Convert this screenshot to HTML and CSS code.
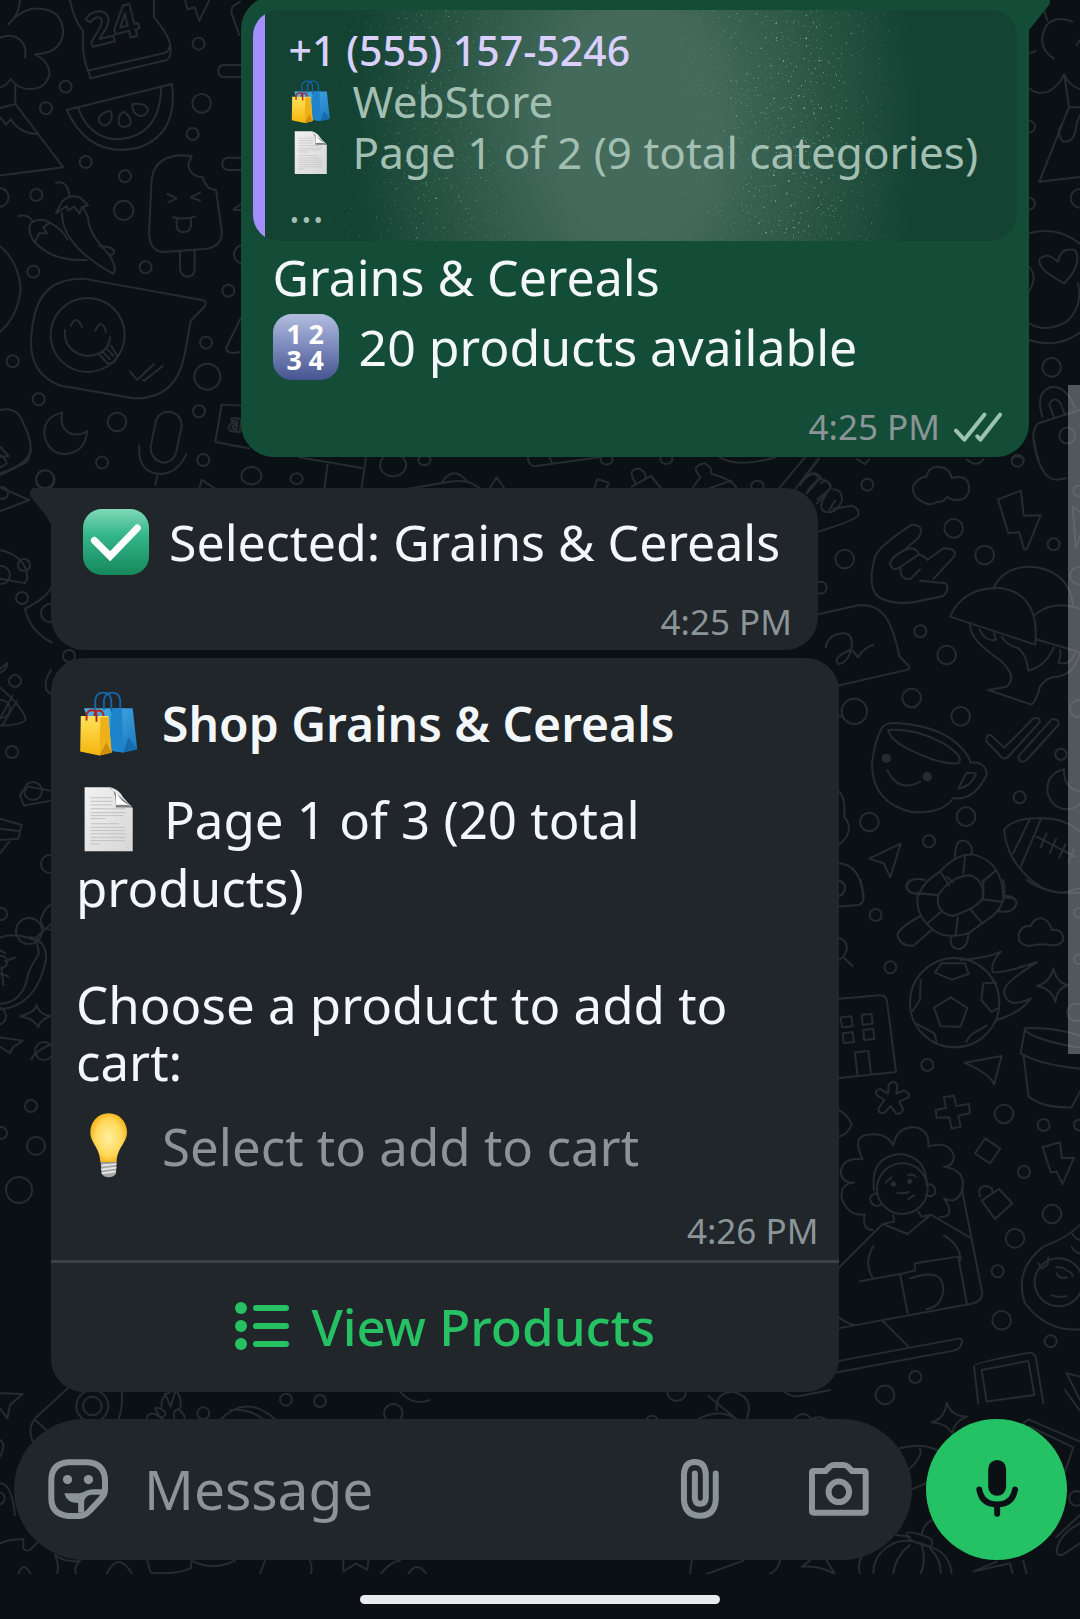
FILE: index.html
```html
<!DOCTYPE html>
<html lang="en">
<head>
<meta charset="utf-8">
<meta name="viewport" content="width=device-width, initial-scale=1">
<title>WebStore chat</title>
<link rel="stylesheet" href="styles.css">
</head>
<body>
<svg class="symbols" aria-hidden="true">
  <defs>
    <linearGradient id="g-blue" x1="0" x2="1" y2="1"><stop offset="0" stop-color="#4db4ec"/><stop offset="1" stop-color="#1b78c0"/></linearGradient>
    <linearGradient id="g-gold" y2="1" x2="0"><stop offset="0" stop-color="#ffe25a"/><stop offset="1" stop-color="#f5b50d"/></linearGradient>
    <linearGradient id="g-paper" x1="0" x2="1" y2="1"><stop offset="0" stop-color="#f2f2f2"/><stop offset="1" stop-color="#d6d6d6"/></linearGradient>
    <linearGradient id="g-green" y2="1" x2="0"><stop offset="0" stop-color="#7fd9b8"/><stop offset=".4" stop-color="#33b58a"/><stop offset="1" stop-color="#16885b"/></linearGradient>
    <linearGradient id="g-indigo" y2="1" x2="0"><stop offset="0" stop-color="#b3bddf"/><stop offset=".5" stop-color="#7b89bb"/><stop offset="1" stop-color="#465590"/></linearGradient>
    <radialGradient id="g-bulb" cx=".5" cy=".5" r=".6"><stop offset="0" stop-color="#fff0a0"/><stop offset=".6" stop-color="#ffd85a"/><stop offset="1" stop-color="#f2a200"/></radialGradient>
  </defs>
  <symbol id="bags" viewBox="141 630 198 206">
    <path d="M162 684H314L328 812L285 822L205 812Z" fill="url(#g-blue)"/>
    <path d="M248 684L240 816L285 822L280 684Z" fill="#1d84cb"/><path d="M285 822L300 775L328 812Z" fill="#156bab"/>
    <path d="M197 690V658Q200 635 222 635Q244 635 247 658V694M224 690V658Q228 635 250 635Q272 635 275 658V682" fill="none" stroke="#1764a8" stroke-width="6"/>
    <path d="M152 708H238L248 822L210 831L150 819Z" fill="url(#g-gold)"/>
    <path d="M213 712H238L248 822L210 831Z" fill="#eeb11a"/><path d="M210 831L232 790L248 822Z" fill="#d18d0c"/>
    <path d="M170 722V704Q173 690 187 690Q201 690 201 704V726M194 708Q197 690 209 691Q222 692 223 708" fill="none" stroke="#b3221b" stroke-width="6"/>
  </symbol>
  <symbol id="page" viewBox="141 917 198 203">
    <path d="M165 918H245Q270 925 283 948L313 982V1115H165Z" fill="url(#g-paper)"/>
    <path d="M240 918Q262 925 261 980H313Z" fill="#7d7d7d"/><path d="M261 929Q275 965 311 975Q290 970 262 972Z" fill="#fff"/>
    <path d="M183 950H250M183 961H252M183 972H250M183 984H290M183 996H292M183 1005H285M183 1014H230M183 1030H270M183 1041H290M183 1051H288M183 1061H292M183 1072H290M183 1082H290M183 1092H212" stroke="#c0c0c0" stroke-width="3"/>
  </symbol>
  <symbol id="check" viewBox="158 87 197 197">
    <rect x="158" y="87" width="197" height="197" rx="56" fill="url(#g-green)"/>
    <path d="M192 181L239 228L320 144" fill="none" stroke="#fff" stroke-width="21" stroke-linecap="round"/>
  </symbol>
  <symbol id="bulb" viewBox="141 69 198 198">
    <path d="M239 70C272 70 294 96 294 127C294 160 264 172 263 217H214C213 172 184 160 184 127C184 96 206 70 239 70Z" fill="url(#g-bulb)"/>
    <path d="M215 217H263L261 250Q255 262 239 262Q223 262 218 250Z" fill="#a9a9a9"/>
    <path d="M217 227L262 222M216 239L262 233M218 250L260 244" stroke="#e8e8e8" stroke-width="5"/>
  </symbol>
</svg>

<div class="wallpaper" aria-hidden="true">
<svg viewBox="0 0 1080 1574" preserveAspectRatio="xMinYMin slice">
  <!-- upper left -->
  <g transform="scale(.3333)">
    <path d="M60 0Q58 45 25 73Q70 20 120 26Q185 30 190 95Q185 160 105 163Q150 185 148 225Q135 268 90 267Q55 268 32 237Q15 262 -5 262M-5 115Q40 95 65 125Q80 140 75 172M46 255V312L190 502L-5 527M-5 325L46 312M-5 345L18 374L32 358Q60 400 112 402"/>
    <path d="M210 0Q220 55 250 95Q245 160 260 200L272 235L500 180Q512 175 512 148Q512 110 462 52V0M262 212L490 160Q506 155 508 142"/>
    <text x="272" y="142" transform="rotate(-14 272 142)" class="doodle-number">24</text>
    <path d="M200 330L516 252Q535 400 420 442Q270 480 200 330ZM234 322Q265 410 345 418Q480 415 484 262M330 332Q295 340 296 362Q310 385 328 370Q342 350 330 332ZM370 335Q350 350 358 375Q375 388 392 372Q395 350 370 335ZM397 312Q440 308 444 330Q435 355 412 345Q395 335 397 312Z"/>
    <path d="M555 0L563 28L584 22L598 62L628 0M720 5L705 15Q692 20 695 40L718 105M722 195H670Q655 198 655 213Q655 230 670 231H722M722 473H680Q665 480 667 492Q668 508 685 510H722M722 613L700 629L722 631"/>
    <path d="M575 468Q470 455 455 535L447 700Q450 755 490 756L605 748Q670 745 665 690L648 570Q618 570 608 532Q565 528 565 490ZM540 753V808Q545 830 562 830Q582 830 584 808V750M502 582L530 595L505 607M600 578L572 592L600 602M519 652Q550 660 586 650M530 656V680Q535 698 552 696Q570 696 573 676V656"/>
    <path d="M168 548Q205 540 208 590M168 640L186 605Q210 580 242 594L264 616L246 622L238 640L222 620L205 632L200 618ZM186 640Q185 735 340 822Q355 800 320 755Q265 700 264 650L250 624M56 648Q85 642 98 664M104 728Q80 690 92 670Q120 650 150 668L130 682L140 700L118 700ZM108 730Q160 785 260 780M150 668Q190 690 202 718M298 738Q345 740 342 758Q338 768 324 762"/>
    <path d="M250 836Q130 835 105 940Q75 1060 120 1115Q160 1160 210 1162L400 1195Q530 1200 555 1060L572 963L615 918Q622 902 606 900ZM195 990Q190 1055 260 1068Q325 1065 330 1012M212 978Q230 940 246 982M286 992Q305 950 318 996M300 1066L322 1090Q345 1095 352 1068L334 1038M308 1055L330 1078M320 1045L340 1068M390 1115L411 1140L462 1092M428 1140L433 1142L488 1098"/>
    <circle cx="263" cy="1005" r="111"/>
    <path d="M187 1238Q130 1250 133 1305Q145 1362 197 1362Q255 1358 262 1293Q240 1308 215 1302Q175 1285 187 1238ZM452 1340L468 1262Q480 1232 515 1236Q545 1245 545 1280L528 1360Q515 1390 485 1388Q450 1375 452 1340ZM418 1337Q412 1420 485 1422Q535 1418 559 1362M472 1426L466 1456M-5 1232Q50 1215 70 1270Q95 1320 92 1355Q80 1395 -5 1422M-5 1335L26 1368L-5 1372M722 955Q690 1020 678 1045Q680 1065 718 1056M722 1217L665 1214L646 1326L722 1340M598 1465L605 1440L645 1465M-5 735Q55 780 62 865Q55 950 -5 1000"/>
    <text x="682" y="1292" transform="rotate(8 682 1292)" class="doodle-letter">a</text>
    <g><circle cx="596" cy="131" r="18"/><circle cx="197" cy="260" r="18"/><circle cx="138" cy="325" r="18"/><circle cx="257" cy="486" r="18"/><circle cx="375" cy="529" r="18"/><circle cx="109" cy="585" r="18"/><circle cx="578" cy="402" r="18"/><circle cx="605" cy="310" r="28"/><circle cx="371" cy="631" r="29"/><circle cx="437" cy="802" r="18"/><circle cx="100" cy="815" r="18"/><circle cx="685" cy="872" r="18"/><circle cx="618" cy="1028" r="18"/><circle cx="622" cy="1130" r="39"/><circle cx="38" cy="1084" r="18"/><circle cx="116" cy="1198" r="18"/><circle cx="351" cy="1266" r="28"/><circle cx="597" cy="1234" r="18"/><circle cx="306" cy="1388" r="18"/><circle cx="610" cy="1380" r="18"/><circle cx="136" cy="1440" r="28"/><circle cx="-2" cy="592" r="28"/><circle cx="730" cy="763" r="28"/></g>
  </g>
  <!-- upper right -->
  <g transform="translate(650 0) scale(.3333)">
    <path d="M1267 65Q1220 45 1190 75Q1155 140 1212 176M1182 30L1192 62M1137 160L1157 153M1290 120L1280 136M1137 265Q1160 285 1195 275Q1230 255 1243 222Q1255 255 1290 268M1243 222L1257 322H1300M1257 322L1168 545L1300 530M1237 370Q1215 400 1240 425Q1275 430 1280 370L1290 345"/>
    <path d="M1137 700Q1230 675 1300 740M1284 850Q1300 920 1250 965Q1190 1000 1137 970M1137 1020Q1230 1050 1300 990M1243 850Q1155 805 1170 775Q1195 755 1224 786Q1230 740 1275 750Q1300 790 1243 850ZM1177 1250Q1155 1180 1200 1162Q1250 1155 1275 1225M1212 1252L1198 1215Q1210 1185 1232 1210L1245 1245M1165 1380Q1135 1295 1165 1270L1290 1230M1088 1375Q1100 1362 1122 1378M1137 800Q1165 830 1137 875"/>
    <g><circle cx="1137" cy="380" r="18"/><circle cx="1137" cy="611" r="18"/><circle cx="1290" cy="595" r="28"/><circle cx="1205" cy="1102" r="28"/><circle cx="1252" cy="1307" r="24"/></g>
  </g>
  <!-- between the first two messages -->
  <g transform="translate(230 440) scale(.3827 .3333)">
    <path d="M0 15L50 25M180 52L345 84M256 65L246 150M355 52L343 150M466 146L570 126Q630 115 655 150M555 125Q585 75 620 125M676 150L697 112L720 150M778 52Q780 80 800 78L965 52M835 52L842 70M950 150L960 118L990 128L982 150M1050 140L1100 108L1130 150M1060 130Q1035 85 1070 86Q1090 100 1085 115M1205 150L1230 110Q1200 80 1240 70Q1260 80 1258 102Q1320 120 1325 150M1240 150L1310 122M1280 52Q1330 85 1425 52M1502 52L1435 145M1538 55L1475 150M1500 115Q1530 85 1545 115Q1510 140 1508 160M1545 118Q1565 120 1570 145L1535 178"/>
    <g><circle cx="56" cy="107" r="26"/><circle cx="174" cy="116" r="16"/><circle cx="426" cy="75" r="34"/><circle cx="508" cy="60" r="16"/><circle cx="984" cy="58" r="16"/><circle cx="1140" cy="56" r="16"/><circle cx="1378" cy="138" r="16"/></g>
  </g>
  <!-- right, beside the replies -->
  <g transform="translate(800 440) scale(.3333)">
    <path d="M0 130L55 60M0 135Q30 90 52 108Q62 120 20 160M62 130Q80 115 92 135Q95 150 50 190M100 148Q130 150 125 185Q105 225 75 215Q50 205 80 160M105 182L88 210M100 206L155 197Q180 205 175 225Q170 240 55 275M172 58L195 72L208 58M500 58Q530 85 550 58"/>
    <path d="M347 170Q325 140 358 118Q370 108 378 112Q385 80 415 80Q450 82 455 114Q508 100 508 150Q500 182 470 180Q450 180 442 170Q430 188 410 186Q385 205 347 170ZM594 178L663 152L671 227L722 226L680 328H672L658 277L625 279Z"/>
    <path d="M225 350Q235 320 335 254Q375 255 358 290L314 330M225 350Q200 440 235 470Q270 495 340 487L430 468Q450 450 438 430L360 422M314 330Q345 315 357 343L305 378Q278 400 270 370Q275 350 314 330ZM357 345Q370 345 382 360L430 325Q475 325 462 350L400 417M360 388L330 418Q295 415 303 382"/>
    <path d="M55 523L175 496Q240 490 268 550Q285 585 298 648L328 680Q330 690 310 692L110 738M77 622Q85 580 135 580Q160 585 155 620Q145 670 115 672Q95 655 150 630Q165 635 173 652Q195 620 220 615"/>
    <path d="M450 530Q490 440 600 444Q720 460 706 614ZM580 443Q620 370 710 382Q810 400 820 500M705 525Q760 475 850 510M709 598L850 640M510 555Q510 600 600 660Q655 710 620 740L565 750L695 794Q710 780 720 740Q740 710 770 710Q820 705 840 640M538 568Q555 605 588 600L582 580M605 590Q620 615 655 625Q680 645 685 692Q735 680 762 622M780 630Q785 650 775 668Q810 680 825 640"/>
    <path d="M245 865Q255 845 300 850Q430 860 490 930Q510 955 512 968Q560 965 560 1005Q520 1085 460 1074Q430 1120 340 1117Q215 1090 216 970Q225 900 245 865ZM265 870Q270 900 330 930Q420 975 475 970Q495 950 430 910Q350 865 265 870ZM500 998L528 1000Q515 1040 475 1046ZM262 990Q295 1060 360 1025"/>
    <circle cx="259" cy="955" r="11" class="dot"/><circle cx="382" cy="1010" r="11" class="dot"/>
    <path d="M560 905Q555 885 572 885L613 923L700 835Q720 830 720 845L625 950Q613 960 605 952ZM655 950L755 838Q780 835 775 855L680 960Q660 975 655 950ZM792 988Q740 1000 742 1055Q755 1105 800 1108Q830 1105 840 1090M792 988Q790 1045 840 1055"/>
    <path d="M612 1170Q640 1135 710 1135Q790 1130 840 1175M612 1170Q620 1240 660 1285Q720 1360 790 1358L840 1345M640 1240L688 1140M660 1285L722 1140M710 1190L825 1250M740 1180L722 1222M768 1197L750 1238M797 1213L778 1252M822 1227L806 1266"/>
    <path d="M207 1256L302 1211L271 1312L251 1270ZM110 1048Q140 1070 132 1130Q170 1175 110 1220M110 1270Q185 1270 190 1380M110 1320Q135 1325 135 1345Q130 1370 110 1370M702 0Q720 130 780 118L800 115M110 825L125 830"/>
    <path d="M465 1250Q465 1200 492 1202Q520 1210 515 1243M355 1368Q365 1330 420 1295Q470 1240 520 1244Q610 1265 610 1380M490 1300L495 1248M420 1295L448 1336M548 1325L587 1292M355 1360L415 1366M415 1366Q450 1310 510 1306Q555 1320 548 1380M375 1320Q325 1310 320 1340Q325 1362 355 1360M610 1372L640 1375"/>
    <g><circle cx="202" cy="134" r="18"/><circle cx="653" cy="62" r="18"/><circle cx="461" cy="265" r="28"/><circle cx="134" cy="357" r="28"/><circle cx="554" cy="345" r="28"/><circle cx="761" cy="313" r="18"/><circle cx="62" cy="443" r="18"/><circle cx="361" cy="574" r="18"/><circle cx="440" cy="645" r="28"/><circle cx="335" cy="774" r="28"/><circle cx="482" cy="829" r="28"/><circle cx="163" cy="814" r="38"/><circle cx="783" cy="943" r="17"/><circle cx="659" cy="1072" r="18"/><circle cx="498" cy="1130" r="28"/><circle cx="208" cy="1146" r="28"/><circle cx="387" cy="1204" r="18"/><circle cx="836" cy="153" r="16"/><circle cx="836" cy="407" r="26"/><circle cx="836" cy="806" r="26"/></g>
    <path d="M818 200L828 325L860 230Z"/>
  </g>
  <!-- lower right -->
  <g transform="translate(800 880) scale(.3333)">
    <path d="M355 40Q340 100 400 150Q440 180 505 160L575 110Q625 70 610 0M415 45Q405 100 460 108Q540 80 550 50V0M355 40L415 45M380 132L422 96M467 165L473 113M545 128L513 90M605 65L545 58M460 8L440 -10M362 108Q300 140 292 165Q300 200 340 197L395 150M452 170Q450 210 480 207Q505 200 505 160M590 92Q640 105 650 70Q645 45 612 48M350 42Q320 40 318 15L330 0M110 80L175 75Q195 70 190 40L182 0M110 48Q135 45 135 25Q135 5 110 0M110 172Q145 180 140 210Q130 240 110 240M130 232L157 258M680 0Q740 45 840 38"/>
    <path d="M690 198Q650 195 657 160Q665 135 692 138Q705 110 730 116Q750 125 755 150Q790 145 790 180Q780 200 748 195Q720 190 690 198ZM710 318Q750 310 760 265Q770 310 805 315Q770 325 766 366Q755 325 710 318Z"/>
    <circle cx="464" cy="368" r="134"/>
    <path d="M453 352L502 384L482 440L422 439L402 383ZM405 278L424 250H495L506 282L455 299ZM362 300L360 360L338 393M550 310L590 308M550 310L544 360L575 396L592 385M350 432L403 460L410 485M498 485L512 465L560 437M480 240Q560 235 603 215Q570 250 578 275Q590 285 710 247Q610 310 612 335Q620 390 693 355Q660 400 590 420"/>
    <path d="M110 357L240 346Q260 345 262 370L288 576L110 595M122 412L154 409L158 439L126 442ZM185 404L215 402L218 431L188 434ZM128 460L158 457L162 486L131 489ZM190 450L220 447L223 477L192 480ZM172 584L165 517L205 513L213 580"/>
    <path d="M494 548L605 528L582 614Q575 585 494 548ZM675 445Q760 440 850 470M675 445L662 520Q720 555 850 567M675 450Q700 480 850 505M671 530L686 650Q730 685 815 682L840 635"/>
    <path d="M266 615Q280 595 292 615L289 641L312 631Q332 640 325 652L298 665L309 688Q305 705 288 700L272 678L252 700Q232 700 236 684L253 660L230 645Q222 630 240 627L264 641ZM432 652L462 647L468 678L507 672L510 700L475 707L482 740L455 746L448 712L410 713L407 690L438 684ZM556 775L601 806L570 850L525 820ZM728 802L780 787L786 834L822 833L788 912L770 875L752 877ZM545 962L597 927L637 970L585 1017ZM541 950Q530 920 558 918Q580 920 577 938M110 685Q150 710 155 735Q140 770 110 770"/>
    <path d="M188 838Q155 770 200 765Q260 755 280 797Q290 740 345 742Q390 750 385 800Q450 780 462 830Q460 860 432 860Q500 870 487 930Q470 975 432 955Q470 1010 420 1012M188 838Q130 830 122 875Q125 910 162 908Q120 910 125 955Q145 1010 194 1003Q185 1050 218 1050"/>
    <circle cx="307" cy="926" r="76"/>
    <path d="M222 930Q210 830 300 822Q380 830 380 915M232 940Q200 945 215 970Q230 985 245 972M385 913Q410 915 405 940Q395 955 378 945M257 908L274 892M325 885Q340 880 347 890M292 938Q310 943 326 936M325 958L343 945M280 1005L282 1025L248 1032L110 1170M248 1032L323 1062L392 1004L512 1074M355 995L365 1010L392 1004M220 1098Q190 1150 218 1193M432 1066Q480 1095 482 1140M485 925L546 1235Q550 1265 510 1272L110 1346M180 1204L300 1182L323 1300M300 1182L345 1172L344 1150L475 1130L500 1268M332 1195Q430 1160 430 1230Q425 1280 380 1288M250 1325L325 1400M90 1448L475 1376Q490 1375 485 1390Q480 1410 460 1412L0 1498M110 1305Q135 1330 165 1335"/>
    <circle cx="280" cy="912" r="5" class="dot"/><circle cx="329" cy="904" r="5" class="dot"/>
    <path d="M840 1035Q800 1075 730 1100Q640 1170 675 1270Q740 1355 840 1348M818 1062Q825 1080 845 1080M815 1100Q825 1120 845 1120M715 1150L725 1165L742 1155L745 1132M768 1162Q790 1160 798 1170M770 1180Q780 1200 800 1192M800 1172Q815 1175 818 1188M755 1246Q780 1255 800 1248"/>
    <circle cx="776" cy="1207" r="72"/>
    <path d="M535 1570L522 1460Q520 1448 690 1418Q705 1420 708 1435L730 1570M560 1565L545 1470L685 1443L703 1545ZM800 1480L840 1560M800 1480L840 1490"/>
    <g><circle cx="227" cy="105" r="18"/><circle cx="271" cy="262" r="18"/><circle cx="382" cy="555" r="18"/><circle cx="612" cy="702" r="28"/><circle cx="731" cy="735" r="18"/><circle cx="672" cy="876" r="18"/><circle cx="756" cy="1002" r="28"/><circle cx="645" cy="1075" r="28"/><circle cx="593" cy="1174" r="18"/><circle cx="605" cy="1321" r="28"/><circle cx="752" cy="1384" r="18"/><circle cx="346" cy="1491" r="18"/><circle cx="255" cy="1545" r="28"/><circle cx="828" cy="397" r="26"/><circle cx="838" cy="735" r="16"/><circle cx="836" cy="98" r="14"/><circle cx="836" cy="238" r="14"/></g>
  </g>
  <!-- left edge -->
  <g transform="translate(0 450) scale(.3333 .625)">
    <path d="M0 8Q20 15 20 22L0 28M90 0Q90 18 70 22L0 40M0 60L88 80L0 98M153 65Q120 75 122 85L153 116M0 160Q80 170 82 205L75 213L0 206M220 190Q165 185 160 205Q165 230 75 254Q90 290 155 308M0 350L22 341Q20 352 0 356M0 380Q65 410 77 430Q75 440 0 441M0 430L38 393M10 438L50 402M153 352Q130 370 140 385L153 390M60 553Q70 540 78 544L80 538L150 545M60 553L72 569L153 561M0 590L65 600L55 622L0 624M0 645L35 622M0 606L60 610M153 727Q130 735 122 752L130 765L153 768M100 780Q140 788 138 815Q110 890 0 895M90 778Q120 790 115 808Q85 830 80 850Q60 885 0 886M0 780Q50 770 120 788M153 758L105 782M60 906Q105 900 110 888Q120 905 155 906Q120 910 115 924Q105 910 60 906ZM0 940L68 945L38 956L30 965L0 955M95 975Q100 960 210 938M0 800L15 805M15 818L45 812M0 838L25 842M5 828L10 856"/>
  </g>
  <g transform="translate(0 450)">
    <circle cx="45" cy="29" r="9"/><circle cx="2" cy="43" r="6"/><circle cx="24" cy="115" r="6"/><circle cx="22" cy="148" r="6"/><circle cx="1" cy="125" r="9"/><circle cx="50" cy="163" r="9"/><circle cx="15" cy="231" r="6"/><circle cx="1" cy="259" r="9"/><circle cx="69" cy="206" r="6"/><circle cx="12" cy="302" r="6"/><circle cx="33" cy="341" r="9"/><circle cx="50" cy="414" r="9"/><circle cx="29" cy="481" r="13"/><circle cx="1" cy="464" r="6"/><circle cx="1" cy="512" r="6"/><circle cx="44" cy="601" r="9"/><circle cx="31" cy="656" r="6"/><circle cx="36" cy="696" r="9"/><circle cx="19" cy="740" r="13"/><circle cx="1" cy="683" r="6"/><circle cx="-3" cy="566" r="9"/>
  </g>
  <!-- around the composer -->
  <g transform="translate(0 1390) scale(.3333)">
    <path d="M0 10L68 12L30 45L22 85L0 55M220 -20L110 80Q80 110 98 155M105 90L145 125M365 0Q370 50 355 90M512 5Q480 20 485 50M520 -5Q550 20 540 55M495 10L512 50L525 8M440 85Q445 65 465 72L490 88M465 55Q475 48 495 65Q500 80 480 82ZM525 90Q515 60 535 58Q555 70 555 90M660 90Q740 10 825 88M690 60Q750 55 790 88M1200 5Q1240 50 1290 30M0 280Q35 280 45 375M0 460Q35 445 70 448V475Q80 490 95 475L115 455M165 495Q180 530 170 552M165 495Q200 520 240 512Q220 530 228 552M320 552Q355 480 396 552M442 512L452 548Q520 555 572 535L575 512M575 512Q640 545 705 512M795 512L780 552M930 512Q938 530 933 552M1030 512V545L1068 520L1102 540L1105 512M1142 552Q1170 515 1200 512M1225 552Q1250 510 1280 552M55 552Q70 510 92 552"/>
    <circle cx="277" cy="48" r="48"/><circle cx="277" cy="48" r="28"/><circle cx="858" cy="29" r="18"/><circle cx="960" cy="33" r="18"/><circle cx="610" cy="70" r="18"/><circle cx="1180" cy="70" r="28"/><circle cx="-4" cy="325" r="18"/><path d="M0 150Q20 160 0 200"/>
  </g>
  <g transform="translate(640 1390) scale(.3333)">
    <path d="M205 18L290 88M230 60Q225 10 275 5Q330 15 327 60L320 90M170 90Q240 50 290 90M460 90Q490 55 515 88Q540 75 560 90M430 0Q445 22 480 18L570 0M875 97Q915 85 920 38Q935 80 982 80Q940 95 938 132Q920 100 875 97ZM780 175Q850 155 900 185M840 175Q850 200 805 240M815 298L870 275M1150 100L1165 88L1320 155M1170 110L1300 172L1275 245M1320 400Q1260 430 1250 480Q1250 505 1275 490L1320 460M1250 440L1320 375M800 430Q810 420 870 445Q885 460 870 470Q800 455 800 430ZM845 435Q850 400 885 385M660 552Q645 500 700 465M700 552Q700 490 760 460Q800 440 870 470Q930 490 935 552M760 552Q765 500 810 465M845 465Q860 510 842 552M870 475Q905 510 902 552M770 435L810 440M155 512L150 552M200 552L310 512M390 552Q415 540 420 512M485 530L510 512M485 530Q540 525 585 552L560 512M1000 545L1070 515M1000 545L1110 520L1118 552M1150 512L1160 552M1275 0L1320 62"/>
    <circle cx="110" cy="5" r="28"/><circle cx="1310" cy="325" r="22"/><circle cx="36" cy="95" r="18"/>
  </g>
</svg>
</div>

<main class="chat">
  <article class="bubble outgoing">
    <svg class="tail tail-right" viewBox="0 0 21 34" aria-hidden="true"><path d="M0 0H18Q23 4 20 9L0 34Z" fill="#134d37"/></svg>
    <blockquote class="quote">
      <svg class="speckles" aria-hidden="true">
        <defs>
          <filter id="grain" x="0" y="0" width="100%" height="100%"><feTurbulence type="fractalNoise" baseFrequency=".4" numOctaves="2" seed="7"/><feColorMatrix values="0 0 0 0 .36  0 0 0 0 .54  0 0 0 0 .46  9 0 0 0 -6.2"/></filter>
          <linearGradient id="band"><stop offset=".08" stop-color="#000"/><stop offset=".24" stop-color="#777"/><stop offset=".4" stop-color="#000"/><stop offset=".54" stop-color="#000"/><stop offset=".72" stop-color="#ccc"/><stop offset=".86" stop-color="#000"/></linearGradient>
          <mask id="fade"><rect width="100%" height="100%" fill="url(#band)"/></mask>
        </defs>
        <g mask="url(#fade)"><rect width="100%" height="100%" filter="url(#grain)"/></g>
      </svg>
      <p class="quote-name">+1 (555) 157-5246</p>
      <p class="quote-line"><svg class="emoji-small" role="img" aria-label="shopping bags"><use href="#bags"/></svg>WebStore</p>
      <p class="quote-line"><svg class="emoji-small" role="img" aria-label="page"><use href="#page"/></svg>Page 1 of 2 (9 total categories)</p>
      <p class="quote-more">...</p>
    </blockquote>
    <div class="outgoing-text">
      <p class="line">Grains &amp; Cereals</p>
      <p class="row"><svg class="emoji" viewBox="96 222 197 197" role="img" aria-label="numbers"><rect x="96" y="222" width="197" height="197" rx="56" fill="url(#g-indigo)"/><g class="digits"><text x="136" y="312">1</text><text x="202" y="312">2</text><text x="136" y="388">3</text><text x="202" y="388">4</text></g></svg>20 products available</p>
    </div>
    <p class="meta"><time>4:25 PM</time><svg class="ticks" viewBox="912 1230 144 94" role="img" aria-label="Delivered"><path d="M918 1288L943 1315L1003 1240M982 1305L991 1315L1050 1240" fill="none" stroke="#9bc3ae" stroke-width="12" stroke-linecap="round" stroke-linejoin="round"/></svg></p>
  </article>

  <article class="bubble incoming selected">
    <svg class="tail tail-left" viewBox="0 0 21 34" aria-hidden="true"><path d="M21 0H3Q-2 4 1 9L21 34Z" fill="#20262a"/></svg>
    <p class="row"><svg class="emoji" role="img" aria-label="check mark"><use href="#check"/></svg>Selected: Grains &amp; Cereals</p>
    <p class="meta"><time>4:25 PM</time></p>
  </article>

  <article class="bubble incoming shop">
    <div class="shop-body">
      <h2 class="row shop-title"><svg class="emoji" role="img" aria-label="shopping bags"><use href="#bags"/></svg>Shop Grains &amp; Cereals</h2>
      <p class="page-line"><svg class="emoji inline" role="img" aria-label="page"><use href="#page"/></svg>Page 1 of 3 (20 total products)</p>
      <p class="line choose">Choose a product to add to cart:</p>
      <p class="row hint"><svg class="emoji" role="img" aria-label="light bulb"><use href="#bulb"/></svg>Select to add to cart</p>
      <p class="meta"><time>4:26 PM</time></p>
    </div>
    <button class="view" type="button">
      <svg class="list-icon" viewBox="630 636 162 144" aria-hidden="true"><g fill="#26c163"><circle cx="648" cy="654" r="18"/><circle cx="648" cy="708" r="18"/><circle cx="648" cy="762" r="18"/><rect x="684" y="645" width="108" height="18" rx="9"/><rect x="684" y="699" width="108" height="18" rx="9"/><rect x="684" y="753" width="108" height="18" rx="9"/></g></svg>
      View Products
    </button>
  </article>
</main>

<footer class="composer">
  <div class="field">
    <button type="button" class="icon" aria-label="Stickers"><svg viewBox="143 212 181 181"><path d="M205 222H262Q315 225 315 280V305Q315 320 302 333L270 367Q255 384 238 384H205Q153 380 153 330V274Q155 225 205 222Z" fill="none" stroke="#8b9498" stroke-width="18"/><circle cx="202" cy="274" r="14"/><circle cx="265" cy="274" r="14"/><path d="M192 315H236Q246 315 258 308Q266 303 280 303H312V320H275Q252 322 252 345V374H234V345Q200 345 192 315Z"/></svg></button>
    <input type="text" placeholder="Message" aria-label="Message">
    <button type="button" class="icon" aria-label="Attach"><svg viewBox="90 207 181 181"><path d="M228 251V330Q225 378 181 378Q135 378 132 330V253Q134 216 165 216Q196 216 198 253V325Q197 342 181 342Q166 342 165 325V251" fill="none" stroke="#8b9498" stroke-width="18" stroke-linecap="round"/></svg></button>
    <button type="button" class="icon camera" aria-label="Camera"><svg viewBox="507 213 181 181"><path d="M516 254Q516 249 522 249H557L570 236Q575 231 582 231H612Q619 231 624 236L637 249H672Q678 249 678 254V370Q678 375 672 375H522Q516 375 516 370Z" fill="none" stroke="#8b9498" stroke-width="18"/><circle cx="597" cy="312" r="31" class="lens"/></svg></button>
  </div>
  <button type="button" class="mic" aria-label="Record voice message"><svg viewBox="980 207 181 181"><rect x="1044" y="213" width="54" height="108" rx="27" fill="#0b1014"/><path d="M1017 302Q1025 347 1071 347Q1117 347 1125 302M1071 347V375" fill="none" stroke="#0b1014" stroke-width="18" stroke-linecap="round"/></svg></button>
</footer>
<div class="home-bar"></div>
<div class="scrollbar"></div>
</body>
</html>
```
FILE: styles.css
```css
* { box-sizing: border-box; }

body {
  position: relative;
  display: flex;
  flex-direction: column;
  min-height: 100vh;
  margin: 0;
  overflow-x: hidden;
  background: #0b1014;
  color: #f4f7fa;
  font-family: "Noto Sans", sans-serif;
  font-size: 50px;
}

p, h2, blockquote { margin: 0; }
svg { display: block; }
button { padding: 0; border: 0; background: none; font: inherit; cursor: pointer; }

.symbols { position: absolute; width: 0; height: 0; }

.wallpaper { position: absolute; inset: 0 0 45px; overflow: hidden; }
.wallpaper svg { width: 100%; height: 100%; }
.wallpaper path, .wallpaper circle, .wallpaper text {
  fill: none;
  stroke: #262b2f;
  stroke-width: 2px;
  stroke-linecap: round;
  stroke-linejoin: round;
  vector-effect: non-scaling-stroke;
}
.wallpaper .dot { fill: #262b2f; }
.wallpaper .doodle-number { font-size: 138px; font-weight: 700; }
.wallpaper .doodle-letter { font-size: 72px; font-weight: 700; }

.chat {
  position: relative;
  display: flex;
  flex: 1;
  flex-direction: column;
  padding: 0 51px 27px;
}

.bubble { position: relative; border-radius: 33px; }
.outgoing {
  align-self: flex-end;
  width: 73vw;
  margin-top: -4px;
  margin-bottom: 31px;
  padding: 14px 12px 10px;
  border-top-right-radius: 0;
  background: #134d37;
}
.incoming { background: #20262a; }

.tail { position: absolute; top: 0; width: 21px; height: 34px; }
.tail-right { left: 100%; }
.tail-left { right: 100%; }

.quote {
  position: relative;
  height: 231px;
  padding: 14px 0 0 36px;
  overflow: hidden;
  border-radius: 26px;
  background: radial-gradient(ellipse 37% 170% at 50% 50%, #446a5b 28%, #144333 100%) #144333;
  color: #a2bfb2;
}
.quote::before {
  content: "";
  position: absolute;
  inset: 0 auto 0 0;
  width: 12px;
  background: #a58fff;
}
.speckles { position: absolute; inset: 0; width: 100%; height: 100%; }
.quote-name, .quote-line, .quote-more { position: relative; white-space: nowrap; }
.quote-name { color: #d9d0ff; font-size: 41px; font-weight: 500; line-height: 52px; }
.quote-line { display: flex; align-items: center; gap: 20px; font-size: 44px; line-height: 51px; }
.quote-more { font-size: 44px; line-height: 56px; }
.emoji-small { width: 44px; height: 44px; }

.outgoing-text { padding: 8px 20px 0; }
.line { line-height: 57px; }
.row { display: flex; align-items: center; gap: 20px; line-height: 68px; white-space: nowrap; }
.emoji { flex: none; width: 66px; height: 66px; }
.digits { fill: #fff; font-size: 80px; font-weight: 700; }
.outgoing-text .row { margin-top: 7px; }

.meta {
  display: flex;
  justify-content: flex-end;
  align-items: center;
  gap: 14px;
  margin-top: 26px;
  color: #8b9598;
  font-size: 35px;
  line-height: 40px;
}
.outgoing .meta { padding-right: 15px; }
.ticks { width: 48px; height: 32px; }

.selected {
  align-self: flex-start;
  min-width: 767px;
  margin-bottom: 8px;
  padding: 20px 26px 8px 32px;
  border-top-left-radius: 0;
}

.shop { width: 73vw; overflow: hidden; font-size: 51px; }
.shop-body { padding: 32px 21px 9px 25px; border-bottom: 3px solid #3a4044; }
.shop-title { font-size: 48px; font-weight: 600; }
.page-line { margin-top: 27px; line-height: 68px; }
.inline { display: inline-block; margin-right: 22px; vertical-align: -14px; }
.choose { margin-top: 55px; }
.hint { margin-top: 22px; color: #8b9498; }
.shop .meta { margin-top: 31px; }
.view {
  display: flex;
  align-items: center;
  justify-content: center;
  gap: 22px;
  width: 100%;
  height: 129px;
  padding-bottom: 3px;
  color: #26c163;
  font-weight: 500;
}
.list-icon { width: 54px; height: 48px; }

.composer {
  position: relative;
  display: flex;
  align-items: center;
  gap: 14px;
  padding: 0 13px 35px 14px;
}
.field {
  display: flex;
  flex: 1;
  align-items: center;
  min-width: 0;
  height: 141px;
  padding: 0 43px 2px 34px;
  border-radius: 71px;
  background: #20262a;
}
.field input {
  flex: 1;
  min-width: 0;
  padding: 0 0 0 36px;
  border: 0;
  outline: 0;
  background: none;
  color: #f4f7fa;
  font: inherit;
  font-size: 55px;
}
.field input::placeholder { color: #8b9498; opacity: 1; }
.icon { width: 60px; height: 60px; fill: #8b9498; }
.icon .lens { fill: none; stroke: #8b9498; stroke-width: 18px; }
.camera { margin-left: 79px; }
.mic {
  display: flex;
  align-items: center;
  justify-content: center;
  width: 141px;
  height: 141px;
  padding-bottom: 3px;
  border-radius: 50%;
  background: #24c264;
}
.mic svg { width: 60px; height: 60px; }

.home-bar {
  position: relative;
  align-self: center;
  width: 33.4%;
  height: 9px;
  margin-bottom: 15px;
  border-radius: 5px;
  background: #e8eaed;
}

.scrollbar {
  position: absolute;
  top: 385px;
  right: 0;
  width: 12px;
  height: 669px;
  background: rgba(160, 166, 170, .48);
}
```
